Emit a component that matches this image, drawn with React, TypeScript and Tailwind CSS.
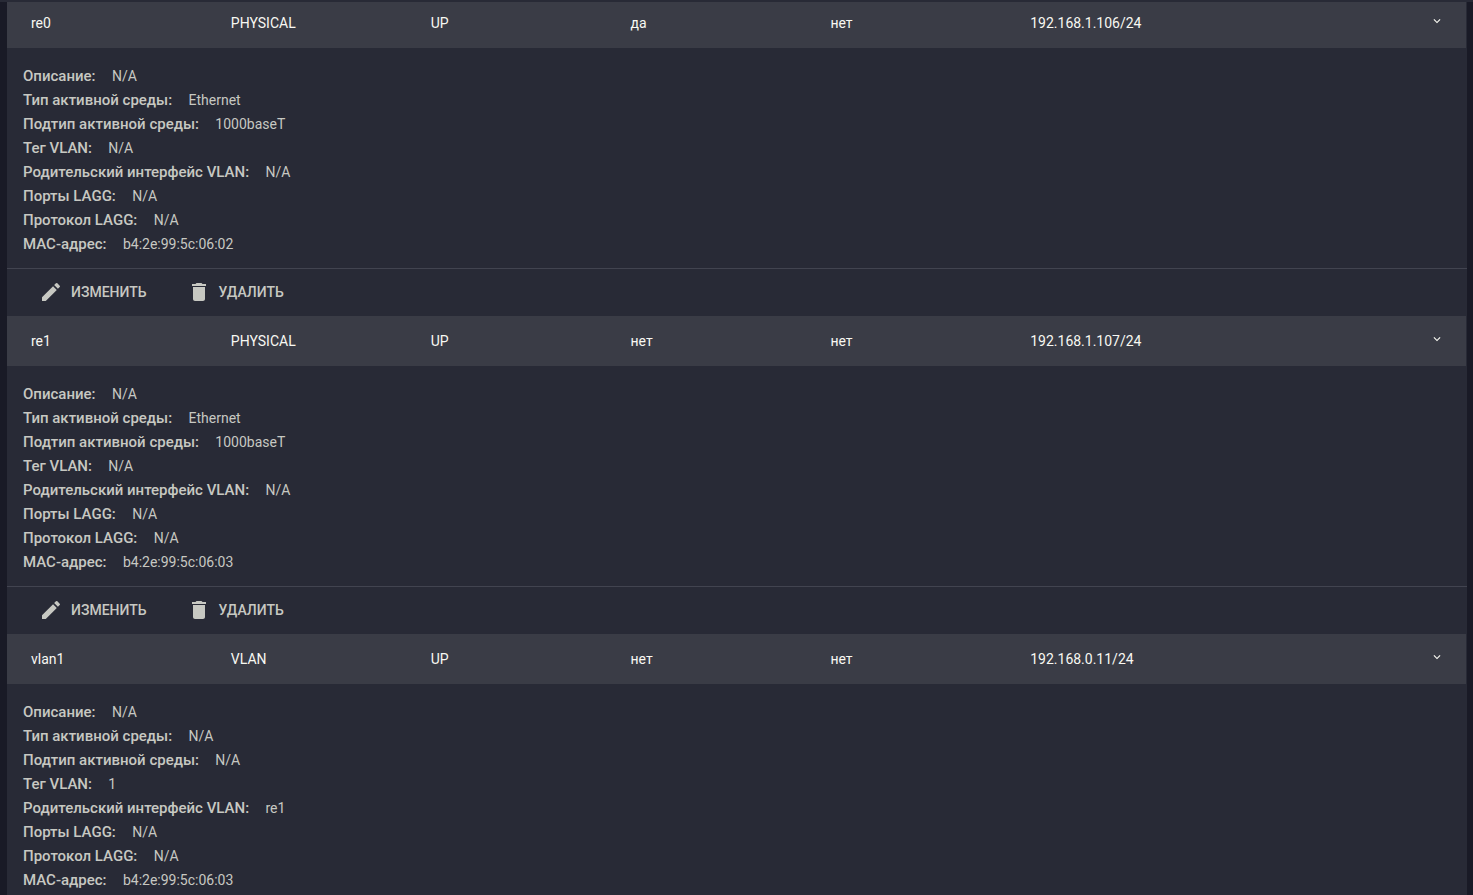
import { MdDelete, MdEdit, MdKeyboardArrowDown } from 'react-icons/md';

type NetworkInterface = {
  cells: string[];
  details: string[];
  hasActions?: boolean;
};

const detailLabels = [
  'Описание:',
  'Тип активной среды:',
  'Подтип активной среды:',
  'Тег VLAN:',
  'Родительский интерфейс VLAN:',
  'Порты LAGG:',
  'Протокол LAGG:',
  'MAC-адрес:',
];

const interfaces: NetworkInterface[] = [
  {
    cells: ['re0', 'PHYSICAL', 'UP', 'да', 'нет', '192.168.1.106/24'],
    details: ['N/A', 'Ethernet', '1000baseT', 'N/A', 'N/A', 'N/A', 'N/A', 'b4:2e:99:5c:06:02'],
    hasActions: true,
  },
  {
    cells: ['re1', 'PHYSICAL', 'UP', 'нет', 'нет', '192.168.1.107/24'],
    details: ['N/A', 'Ethernet', '1000baseT', 'N/A', 'N/A', 'N/A', 'N/A', 'b4:2e:99:5c:06:03'],
    hasActions: true,
  },
  {
    cells: ['vlan1', 'VLAN', 'UP', 'нет', 'нет', '192.168.0.11/24'],
    details: ['N/A', 'N/A', 'N/A', '1', 're1', 'N/A', 'N/A', 'b4:2e:99:5c:06:03'],
  },
];

function InterfaceActions() {
  return (
    <footer className="flex h-12 items-center border-t border-[#424450] pb-px pl-8 text-sm font-medium">
      <button className="flex items-center gap-2">
        <MdEdit className="size-6" />
        ИЗМЕНИТЬ
      </button>
      <button className="ml-10 flex items-center gap-2">
        <MdDelete className="size-6" />
        УДАЛИТЬ
      </button>
    </footer>
  );
}

function InterfaceRow({ item }: { item: NetworkInterface }) {
  return (
    <section className="h-[318px] shrink-0">
      <header className="mr-px flex h-[50px] items-center bg-[#3a3c46] pl-6 text-sm text-[#f8f8f2]">
        {item.cells.map((cell, index) => (
          <div key={index} className="w-[199.85px] shrink-0">
            {cell}
          </div>
        ))}
        <MdKeyboardArrowDown className="mr-[22px] mb-1 ml-auto size-[14px]" />
      </header>
      <dl className="h-[220px] pt-4 pl-4">
        {item.details.map((value, index) => (
          <div key={detailLabels[index]} className="flex h-6 items-baseline gap-[16.4px]">
            <dt className="text-[15px]/[24px] font-medium">{detailLabels[index]}</dt>
            <dd className="text-sm/[24px]">{value}</dd>
          </div>
        ))}
      </dl>
      {item.hasActions && <InterfaceActions />}
    </section>
  );
}

export default function App() {
  return (
    <div className="h-[895px] overflow-hidden border-t-2 border-[#282a36] bg-[#191a26] pr-[6px] pl-[7px] font-['Roboto',sans-serif] text-[#c7c8c2]">
      <main className="-mt-1 flex h-[897px] flex-col overflow-hidden bg-[#282a36]">
        {interfaces.map((item) => (
          <InterfaceRow key={item.cells[0]} item={item} />
        ))}
      </main>
    </div>
  );
}
